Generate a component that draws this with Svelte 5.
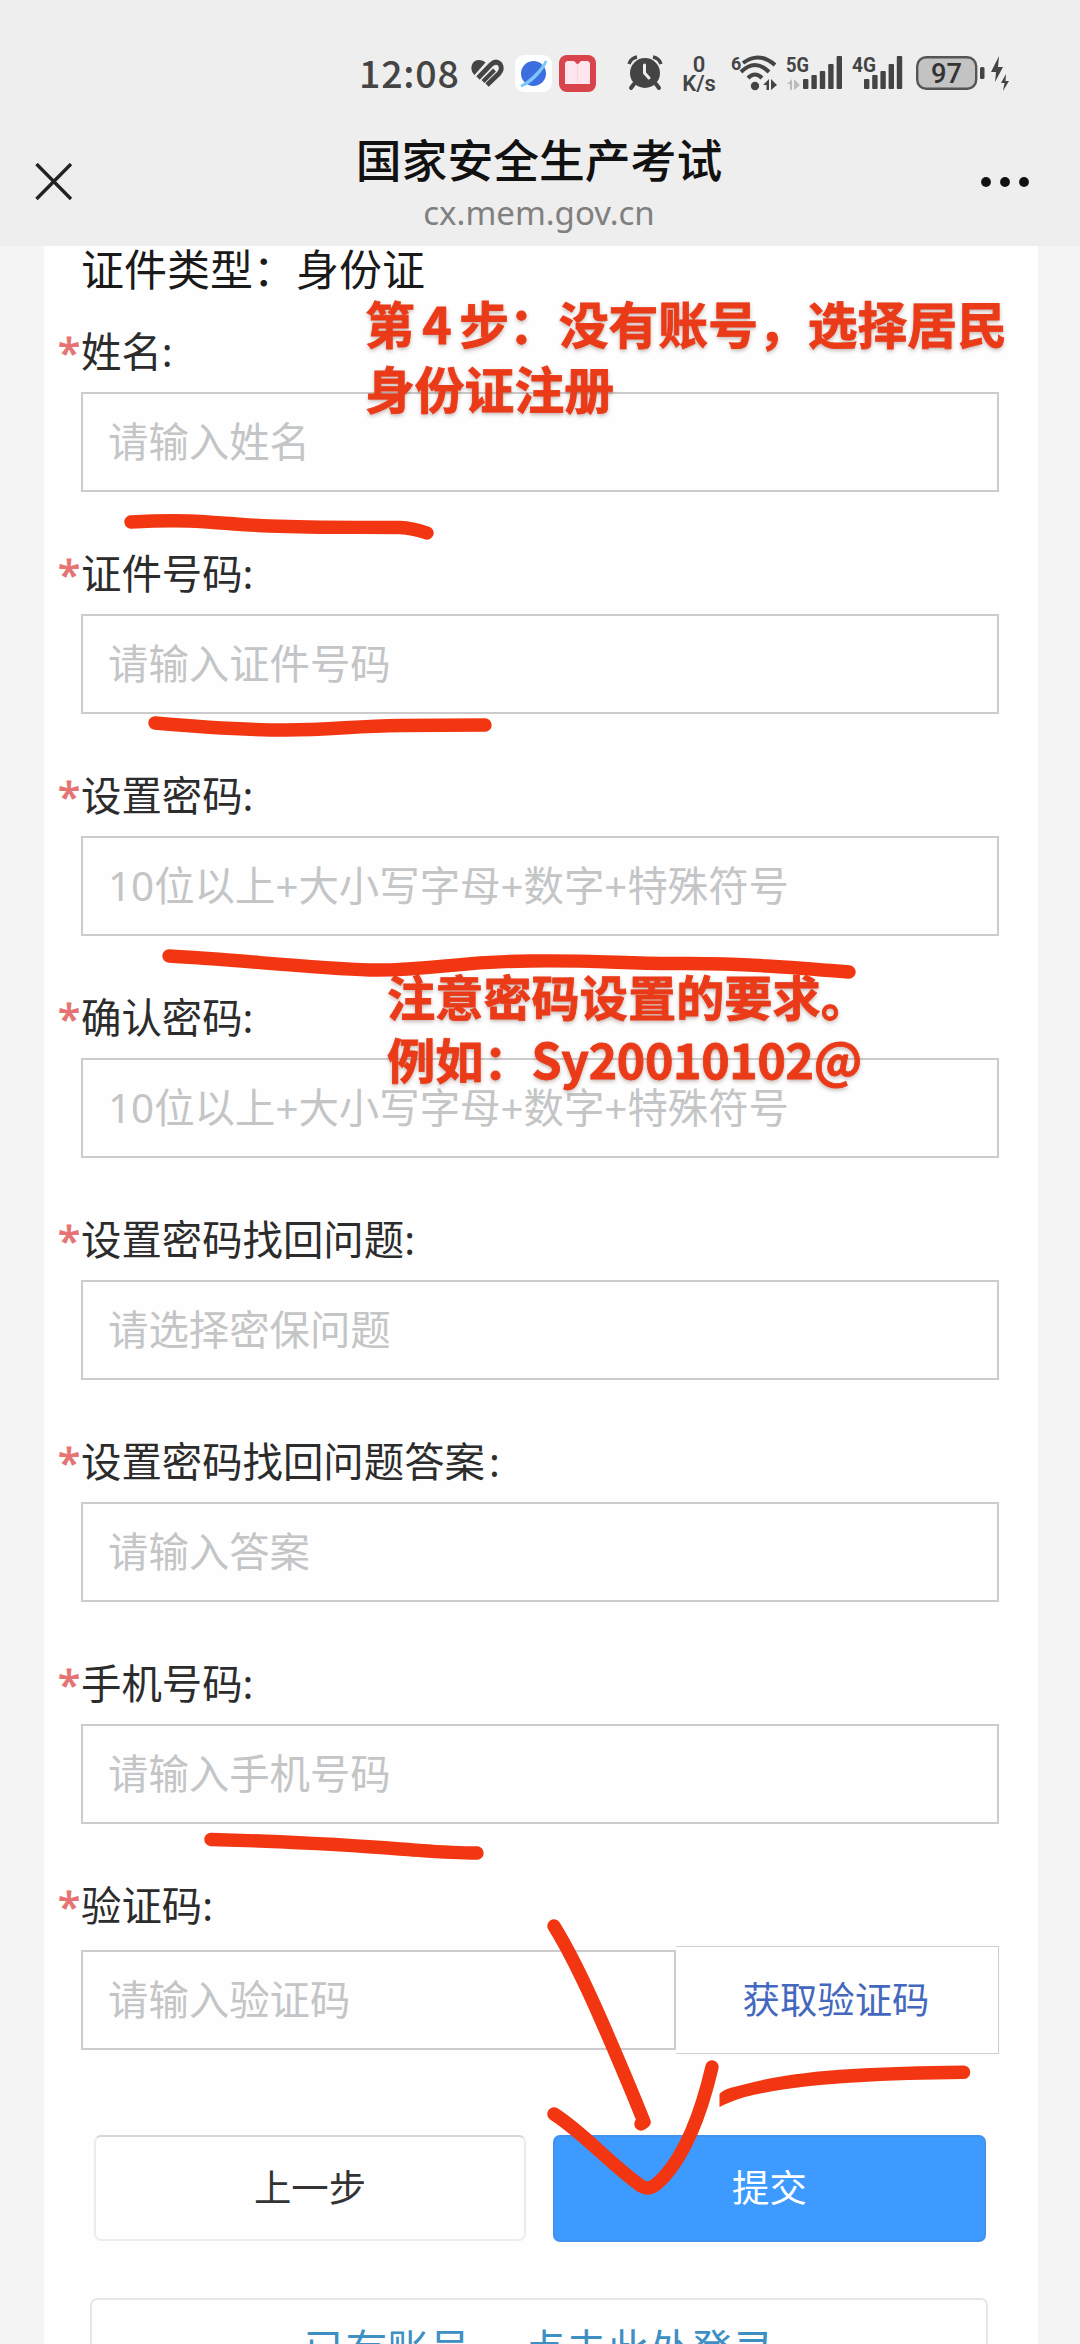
<script>
  const fields = [
    { id: 'name', label: '姓名', placeholder: '请输入姓名' },
    { id: 'idNumber', label: '证件号码', placeholder: '请输入证件号码' },
    { id: 'password', label: '设置密码', placeholder: '10位以上+大小写字母+数字+特殊符号' },
    { id: 'confirm', label: '确认密码', placeholder: '10位以上+大小写字母+数字+特殊符号' },
    { id: 'question', label: '设置密码找回问题', placeholder: '请选择密保问题' },
    { id: 'answer', label: '设置密码找回问题答案', placeholder: '请输入答案', spaced: true },
    { id: 'phone', label: '手机号码', placeholder: '请输入手机号码' },
  ];

  // freehand pen strokes, in page coordinates
  const strokes = [
    'M131 522 C150 521 170 520.500 189 521 C215 522 240 525 270 526 C320 528 360 527 400 527.500 C412 528 418 530 427 533',
    'M155 723 C200 727 240 730 286 730 C330 730 355 726 400 725.500 L485 725',
    'M169 956 C230 959 310 968 370 970 C430 971 460 961 530 961 C600 960 625 964 680 963.500 C740 963 800 968 849 972',
    'M211 1839.500 L260 1841 C310 1843 350 1845 400 1849 C430 1851 450 1853 477 1853',
    'M554 1926 Q575 1960 602 2022 T644 2122 L641 2124',
    'M554 2114 C585 2134 609 2163 641 2186 C650 2191 655 2186 664 2177 C688 2150 702 2110 712 2067',
  ];

  const bars = [10, 14, 18, 25, 33];

  let values = {};
</script>

<div class="page">
  <header>
    <div class="status">
      <span class="time">12:08</span>
      <svg class="heart" width="34" height="30" viewBox="0 0 34 30">
        <path d="M2.500 15 C-2 9 1 1 8 1 C10.500 1 13 2 14.500 3.500 L3.500 16 Z" fill="#444" />
        <path d="M7 19 L20 5.500 Q25 1 29 5 Q32 10 28 14.500 L16 26" fill="none" stroke="#444" stroke-width="4.800" />
        <path d="M12 22.500 L23.500 11" fill="none" stroke="#444" stroke-width="4" />
      </svg>
      <svg class="planet" width="37" height="37" viewBox="0 0 37 37">
        <rect width="37" height="37" rx="9" fill="#fdfeff" />
        <circle cx="18.500" cy="18.500" r="12.500" fill="#3d6ee0" />
        <path d="M6 31 C14 29 28 16 31 6 C27 15 14 27 6 31 Z" fill="#86cdfb" stroke="#7cc8fa" stroke-width="2.500" />
      </svg>
      <svg class="book" width="37" height="37" viewBox="0 0 37 37">
        <rect width="37" height="37" rx="8" fill="#d9434c" />
        <path d="M6 8 L8 6 H15 L18.500 9.500 L22 6 H29 L31 8 V29 H6 Z" fill="#ffe6ee" />
        <path d="M18.500 9 V28" stroke="#fbd5e0" stroke-width="1.500" />
      </svg>
      <svg class="alarm" width="36" height="36" viewBox="0 0 36 36">
        <circle cx="18" cy="18" r="15" fill="#444" />
        <path d="M2 9 Q4 3 10 2 M34 9 Q32 3 26 2" fill="none" stroke="#444" stroke-width="3.500" />
        <path d="M7 29 L4 33 M29 29 L32 33" stroke="#444" stroke-width="4" stroke-linecap="round" />
        <path d="M17.500 10 V18 L22 23" fill="none" stroke="#eee" stroke-width="3" stroke-linecap="round" />
      </svg>
      <div class="rate"><span>0</span><span>K/s</span></div>
      <svg class="wifi" width="48" height="40" viewBox="0 0 48 40">
        <text x="0" y="16" font-size="18" font-weight="700" fill="#444">6</text>
        <g fill="none" stroke="#444" stroke-width="4">
          <path d="M12 9 Q28 -3 44 11" />
          <path d="M10 18 Q24 4 38 18" />
          <path d="M17 24 Q24 17 31 24" />
        </g>
        <circle cx="24" cy="32" r="4.200" fill="#444" />
        <path d="M32 31 L38 25 V36 H35.500 V31 Z M40 25 L46 31 L40 36 Z" fill="#444" />
      </svg>
      <svg class="sig5" width="57" height="40" viewBox="0 0 57 40">
        <text x="0" y="17.500" font-size="21" font-weight="700" fill="#444" textLength="23" lengthAdjust="spacingAndGlyphs">5G</text>
        <path d="M1 30 L6 25 V36 H4 V30 Z M8 25 L14 31 L8 36 Z" fill="#bbb" />
        {#each bars as h, i}
          <rect x={17 + i * 8.4} y={35 - h} width="5.400" height={h} rx="1" fill="#444" />
        {/each}
      </svg>
      <svg class="sig4" width="52" height="40" viewBox="0 0 52 40">
        <text x="0" y="17.500" font-size="21" font-weight="700" fill="#444" textLength="24" lengthAdjust="spacingAndGlyphs">4G</text>
        {#each bars as h, i}
          <rect x={12 + i * 8.2} y={35 - h} width="5.400" height={h} rx="1" fill="#444" />
        {/each}
      </svg>
      <svg class="battery" width="96" height="40" viewBox="0 0 96 40">
        <rect x="1.200" y="3.200" width="59" height="31.500" rx="9" fill="#c3c3c3" stroke="#555" stroke-width="2.400" />
        <rect x="64" y="13" width="4.500" height="12" rx="1.500" fill="#444" />
        <text x="30.500" y="28.500" font-size="28" font-weight="500" text-anchor="middle" fill="#333" textLength="31" lengthAdjust="spacingAndGlyphs">97</text>
        <path d="M83 2 L75 18 H80 L79 28 L87 13 H82 Z M90 20 L85 29 H88.500 L87 37 L93 27 H89.500 Z" fill="#444" />
      </svg>
    </div>

    <div class="nav">
      <svg class="close" width="38" height="38" viewBox="0 0 38 38">
        <path d="M1.500 1 L36 36 M36 1 L1.500 36" stroke="#222" stroke-width="3.400" />
      </svg>
      <div class="title">
        <h1>国家安全生产考试</h1>
        <p>cx.mem.gov.cn</p>
      </div>
      <svg class="more" width="50" height="12" viewBox="0 0 50 12">
        <circle cx="6" cy="6" r="4.900" />
        <circle cx="25" cy="6" r="4.900" />
        <circle cx="44" cy="6" r="4.900" />
      </svg>
    </div>
  </header>

  <main>
    <div class="type">证件类型：身份证</div>

    {#each fields as field (field.id)}
      <div class="field">
        <label for={field.id} class:spaced={field.spaced}><i>*</i>{field.label}<b>:</b></label>
        <input id={field.id} placeholder={field.placeholder} bind:value={values[field.id]} />
      </div>
    {/each}

    <div class="field">
      <label for="code"><i>*</i>验证码<b>:</b></label>
      <div class="code-row">
        <input id="code" placeholder="请输入验证码" bind:value={values.code} />
        <button class="get-code">获取验证码</button>
      </div>
    </div>

    <div class="actions">
      <button class="prev">上一步</button>
      <button class="submit">提交</button>
    </div>
    <button class="login">已有账号， 点击此处登录</button>
  </main>

  <svg class="pen" width="1080" height="2344" viewBox="0 0 1080 2344">
    {#each strokes as d}
      <path {d} />
    {/each}
    <path class="cut" d="M719.500 2094 C724 2089 730 2088 742 2085 C800 2069 870 2067 963 2065.500 A6.700 6.700 0 0 1 964 2079 C880 2080 800 2083 745 2097 C735 2100 727 2103 719.500 2107 Z" />
  </svg>
  <div class="note step">第<em>4</em>步：没有账号，选择居民<br />身份证注册</div>
  <div class="note hint">注意密码设置的要求。<br />例如：<span>Sy20010102@</span></div>
</div>

<style>
  :global(body) {
    margin: 0;
    background: #f4f4f4;
  }
  .page {
    position: relative;
    width: 1080px;
    height: 2344px;
    overflow: hidden;
    background: #f4f4f4;
    font-family: 'Noto Sans', 'Noto Sans CJK SC', sans-serif;
  }
  header {
    height: 246px;
    background: #eee;
    display: flex;
    flex-direction: column;
  }
  .status {
    height: 92px;
    padding: 54px 0 0 359px;
    box-sizing: border-box;
    display: flex;
    align-items: flex-start;
    color: #444;
    font-family: Roboto, sans-serif;
  }
  .status svg {
    flex: none;
    overflow: visible;
  }
  .time {
    width: 112px;
    font-family: 'Noto Sans CJK SC', sans-serif;
    font-size: 37.5px;
    line-height: 36px;
    font-weight: 500;
    letter-spacing: 0.8px;
  }
  .heart {
    margin-top: 5px;
  }
  .planet {
    margin: 1px 0 0 10px;
  }
  .book {
    margin: 1px 0 0 7px;
  }
  .alarm {
    margin: 1px 0 0 31px;
  }
  .rate {
    width: 44px;
    margin-left: 14px;
    display: flex;
    flex-direction: column;
    align-items: center;
    padding-top: 1px;
    font-size: 22px;
    line-height: 19px;
    font-weight: 600;
  }
  .wifi {
    margin-left: 10px;
  }
  .sig5 {
    margin-left: 7px;
  }
  .sig4 {
    margin-left: 9px;
  }
  .battery {
    margin-left: 12px;
  }
  .nav {
    flex: 1;
    padding: 0 50px 0 35px;
    display: flex;
    align-items: flex-start;
    justify-content: space-between;
  }
  .close {
    margin-top: 71px;
  }
  .more {
    margin-top: 84px;
    fill: #111;
  }
  .title {
    text-align: center;
    padding-left: 25px;
  }
  h1 {
    margin: 36px 0 0;
    font-size: 45.8px;
    line-height: 60px;
    font-weight: 500;
    color: #111;
    font-family: 'Noto Sans CJK SC', sans-serif;
  }
  p {
    margin: 5px 0 0;
    font-size: 33px;
    line-height: 40px;
    color: #808080;
  }
  main {
    width: 994px;
    height: 2098px;
    margin-left: 44px;
    background: #fefefe;
    overflow: hidden;
  }
  .type {
    margin: 0 0 28px 37px;
    font-size: 43px;
    line-height: 47px;
    color: #1a1a1a;
    white-space: nowrap;
  }
  .field {
    height: 222px;
  }
  label {
    display: flex;
    padding-top: 1px;
    margin-bottom: 10px;
    font-size: 40.4px;
    line-height: 60px;
    color: #2c2c2c;
    white-space: nowrap;
  }
  i {
    width: 23px;
    padding-left: 14px;
    font-style: normal;
    color: #e57373;
    -webkit-text-stroke: 0.8px #e57373;
  }
  label b {
    font-weight: 400;
  }
  .spaced b {
    margin-left: 4px;
  }
  input {
    display: block;
    box-sizing: border-box;
    width: 918px;
    height: 100px;
    margin: 0 0 0 37px;
    padding: 0 25px 2px;
    border: 2px solid #ccc;
    border-radius: 0;
    outline: none;
    background: transparent;
    font-family: inherit;
    font-size: 40.4px;
  }
  input::placeholder {
    color: #c3c5c6;
    opacity: 1;
  }
  button {
    box-sizing: border-box;
    padding: 0 0 5px;
    background: #fefefe;
    font-family: inherit;
    font-size: 37.4px;
    color: #333;
  }
  .code-row {
    display: flex;
    align-items: center;
  }
  .code-row input {
    width: 595px;
  }
  .get-code {
    width: 323px;
    height: 108px;
    padding-right: 2px;
    border: 1px solid #d0d0d0;
    border-left: 0;
    color: #4468be;
  }
  .actions {
    display: flex;
    gap: 27px;
    margin: 38px 0 0 50px;
  }
  .prev {
    width: 432px;
    height: 106px;
    border: 2px solid #ececec;
    border-top-color: #d6d6d6;
    border-radius: 7px;
  }
  .submit {
    width: 433px;
    height: 107px;
    border: 2px solid #4193ec;
    border-radius: 7px;
    background: #3d9bff;
    color: #fff;
  }
  .login {
    display: block;
    width: 898px;
    height: 106px;
    padding-bottom: 9px;
    margin: 56px 0 0 46px;
    border: 2px solid #e6e6e6;
    border-radius: 7px;
    font-size: 41.8px;
    color: #3d8fc4;
  }
  .pen {
    position: absolute;
    left: 0;
    top: 0;
    pointer-events: none;
    fill: none;
    stroke: #f23611;
    stroke-width: 13.4px;
    stroke-linecap: round;
    stroke-linejoin: round;
  }
  .cut {
    fill: #f23611;
    stroke: none;
  }
  .note {
    position: absolute;
    font-family: 'Noto Sans CJK SC', sans-serif;
    font-weight: 700;
    color: #ea3a18;
    white-space: nowrap;
    -webkit-text-stroke: 0.8px #ea3a18;
    text-shadow: 0 2px 4px rgba(90, 50, 40, 0.4);
  }
  .step {
    left: 365px;
    top: 290px;
    font-size: 49.8px;
    line-height: 65px;
  }
  em {
    font-style: normal;
    padding: 0 7.5px;
  }
  .hint {
    left: 387px;
    top: 964px;
    font-size: 48.2px;
    line-height: 63px;
  }
  .hint span {
    letter-spacing: -0.3px;
  }
</style>
